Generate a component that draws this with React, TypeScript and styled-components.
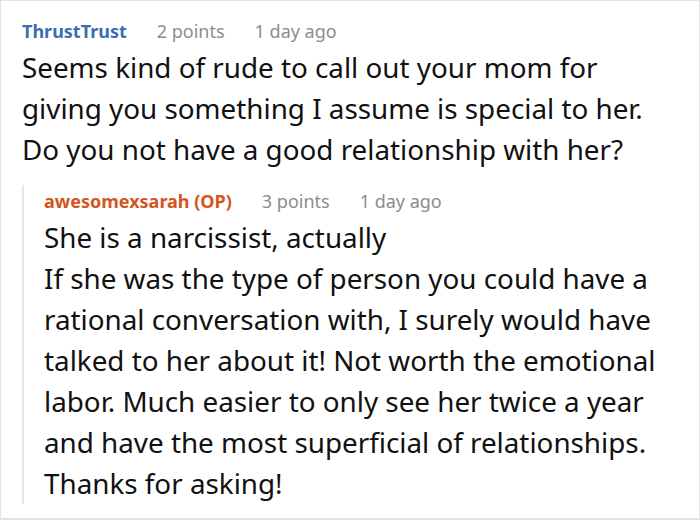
import React from 'react'
import styled, { createGlobalStyle } from 'styled-components'

const Global = createGlobalStyle`
  html, body { margin: 0; padding: 0; background: #fff; }
  body { font-family: "Noto Sans", "Open Sans", sans-serif; color: #111; }
`

const Frame = styled.div`
  box-sizing: border-box;
  width: 700px;
  height: 520px;
  border: 1px solid #e2e2e2;
  border-bottom-width: 2px;
  padding: 14px 0 0 21px;
  overflow: hidden;
`

const Header = styled.div<{ $nested?: boolean }>`
  display: flex;
  align-items: baseline;
  gap: 30px;
  font-size: 18px;
  line-height: 32px;
  margin-top: ${p => (p.$nested ? '-16px' : '0')};
`

const Author = styled.span<{ $op?: boolean }>`
  font-weight: 700;
  color: ${p => (p.$op ? '#d4541e' : '#3a6db5')};
`

const Meta = styled.span`
  color: #8c8c8c;
`

const Body = styled.p`
  margin: 0;
  font-size: 27.8px;
  line-height: 41px;
  white-space: pre-line;
`

const Reply = styled.div`
  margin-top: 31px;
  border-left: 2px solid #e8e8e8;
  padding-left: 20px;
  margin-bottom: -4px;
`

type CommentProps = {
  author: string
  op?: boolean
  nested?: boolean
  points: string
  age: string
  text: string
}

function Comment({ author, op, nested, points, age, text }: CommentProps) {
  return (
    <>
      <Header $nested={nested}>
        <Author $op={op}>{author}</Author>
        <Meta>{points}</Meta>
        <Meta>{age}</Meta>
      </Header>
      <Body>{text}</Body>
    </>
  )
}

export default function App() {
  return (
    <>
      <Global />
      <Frame>
        <Comment
          author="ThrustTrust"
          points="2 points"
          age="1 day ago"
          text={'Seems kind of rude to call out your mom for\ngiving you something I assume is special to her.\nDo you not have a good relationship with her?'}
        />
        <Reply>
          <Comment
            author="awesomexsarah (OP)"
            op
            nested
            points="3 points"
            age="1 day ago"
            text={'She is a narcissist, actually\nIf she was the type of person you could have a\nrational conversation with, I surely would have\ntalked to her about it! Not worth the emotional\nlabor. Much easier to only see her twice a year\nand have the most superficial of relationships.\nThanks for asking!'}
          />
        </Reply>
      </Frame>
    </>
  )
}
